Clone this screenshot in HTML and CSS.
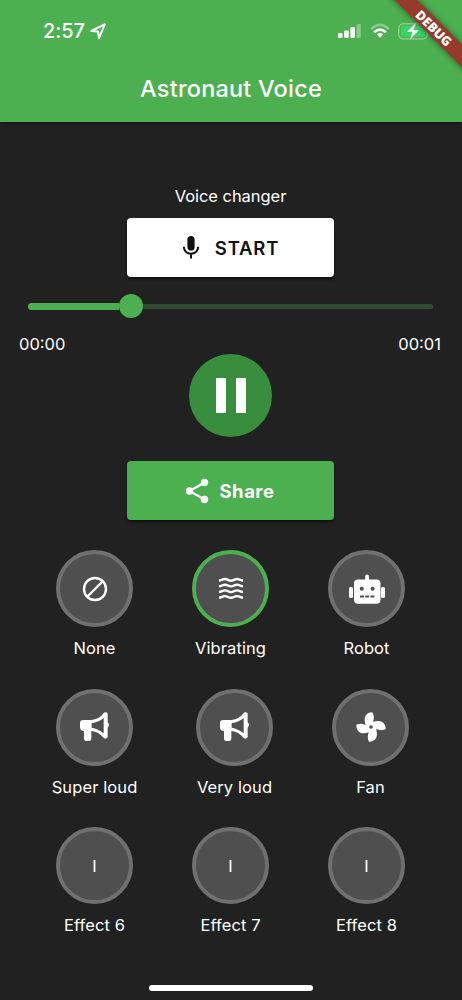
FILE: index.html
```html
<!DOCTYPE html>
<html lang="en">
<head>
<meta charset="utf-8">
<title>Astronaut Voice</title>
<link rel="stylesheet" href="styles.css">
</head>
<body>
<div class="app">
  <header class="header">
    <div class="status">
      <span class="clock">2:57</span>
      <svg class="location" width="16" height="17" viewBox="0 0 16 17"><path d="M1.2 8 14.7 1.3 9 15.2 8 8.6Z"/></svg>
      <span class="spacer"></span>
      <svg class="signal" width="24" height="16" viewBox="0 0 24 16"><rect x="0" y="10" width="4.5" height="5" rx="1"/><rect x="6.2" y="7.5" width="4.5" height="7.5" rx="1"/><rect x="12.4" y="4" width="4.5" height="11" rx="1"/><rect class="faded" x="18.6" y="1" width="4.2" height="14" rx="1"/></svg>
      <svg class="wifi" width="20" height="16" viewBox="0 0 20 16"><path class="faded" d="M1.2 6Q10-2.3 18.8 6"/><path d="M4.2 9.2Q10 4 15.8 9.2"/><path class="dot" d="M6.6 11.3Q10 8.5 13.4 11.3L10 14.7Z"/></svg>
      <svg class="battery" width="34" height="20" viewBox="0 0 34 20"><rect x=".8" y="2.8" width="28.5" height="15" rx="4.5" fill="none" stroke="#9bd09c" stroke-width="1.2"/><rect x="2.8" y="4.8" width="24.5" height="11" rx="2.5" fill="#33d764"/><path d="M31 8v5q2-2.500 0-5" fill="#9bd09c"/><path d="M18.500 1 8.500 11h5.500l-2.600 8.500 10-10.500h-5.600Z" fill="#fff" stroke="#4caf50" stroke-width=".5"/></svg>
    </div>
    <h1 class="title">Astronaut Voice</h1>
    <div class="debug">DEBUG</div>
  </header>

  <main class="main">
    <div class="caption">Voice changer</div>
    <button class="button start">
      <svg width="18" height="25" viewBox="0 0 18 25"><rect x="5.400" y="1" width="7.200" height="14.500" rx="3.600" fill="#111"/><path d="M1.800 11.800C1.800 21 16.200 21 16.200 11.800M9 19v4.500" fill="none" stroke="#111" stroke-width="2"/></svg>
      <span>START</span>
    </button>
    <div class="slider"><div class="played"></div><div class="thumb"></div><div class="rest"></div></div>
    <div class="times"><span>00:00</span><span>00:01</span></div>
    <div class="pause"><i></i><i></i></div>
    <button class="button share">
      <svg width="24" height="26" viewBox="0 0 24 26"><path d="M19.500 4.500 4.500 13l15 8.500" fill="none" stroke="#fff" stroke-width="2.200"/><g fill="#fff"><circle cx="19.500" cy="4.500" r="3.700"/><circle cx="4.500" cy="13" r="3.700"/><circle cx="19.500" cy="21.500" r="3.700"/></g></svg>
      <span>Share</span>
    </button>

    <section class="effects">
      <div class="row">
        <div class="effect"><div class="disc"><svg width="26" height="26" viewBox="0 0 26 26" fill="none" stroke="#fff" stroke-width="2.400"><circle cx="13" cy="13" r="11"/><path d="M5.500 20.500l15-15"/></svg></div><span>None</span></div>
        <div class="effect"><div class="disc selected"><svg width="26" height="24" viewBox="0 0 26 24" fill="none" stroke="#fff" stroke-width="2.400"><path d="M1 3.500c3 0 3-1.500 6-1.500s3 1.700 6 1.700S16 2 19 2s3 1.500 6 1.500M1 9.200c3 0 3-1.500 6-1.500s3 1.700 6 1.700 3-1.700 6-1.700 3 1.500 6 1.500M1 14.900c3 0 3-1.500 6-1.500s3 1.700 6 1.700 3-1.700 6-1.700 3 1.500 6 1.500M1 20.600c3 0 3-1.500 6-1.500s3 1.700 6 1.700 3-1.700 6-1.700 3 1.500 6 1.500"/></svg></div><span>Vibrating</span></div>
        <div class="effect"><div class="disc"><svg width="38" height="30" viewBox="0 0 38 30"><g fill="#fff"><rect x="1" y="13" width="4" height="11" rx="1.500"/><rect x="33" y="13" width="4" height="11" rx="1.500"/><rect x="6" y="5.500" width="26.500" height="24.300" rx="4"/><rect x="17.200" y=".5" width="3.800" height="8" rx="1.900"/></g><g fill="#4f4f4f"><circle cx="13.800" cy="14.800" r="2"/><circle cx="24.600" cy="14.800" r="2"/><path d="M12 21.500h4v2h-4zM17.200 21.500h4v2h-4zM22.400 21.500h4v2h-4z"/></g></svg></div><span>Robot</span></div>
      </div>
      <div class="row">
        <div class="effect wide"><div class="disc"><svg width="30" height="30" viewBox="0 0 90 90"><path d="M10 24H34Q58 21 69 5Q76-3 83 4V31Q91 38 83 47V76Q76 84 69 76Q57 60 34 57V80Q34 87 27 87H19Q12 87 12 80V58Q0 56 0 46V34Q0 24 10 24ZM35 34V47Q54 50 71 64V18Q55 31 35 34Z" fill="#fff" fill-rule="evenodd"/></svg></div><span>Super loud</span></div>
        <div class="effect"><div class="disc"><svg width="30" height="30" viewBox="0 0 90 90"><path d="M10 24H34Q58 21 69 5Q76-3 83 4V31Q91 38 83 47V76Q76 84 69 76Q57 60 34 57V80Q34 87 27 87H19Q12 87 12 80V58Q0 56 0 46V34Q0 24 10 24ZM35 34V47Q54 50 71 64V18Q55 31 35 34Z" fill="#fff" fill-rule="evenodd"/></svg></div><span>Very loud</span></div>
        <div class="effect"><div class="disc"><svg width="30" height="30" viewBox="0 0 90 90"><path d="M49 1C28 2 22 17 29 39C18 34 8 35 1 38C0 59 15 69 38 61C34 72 35 82 39 89C59 89 68 74 60 51C71 56 82 55 89 51C89 31 75 22 51 29C56 18 53 8 49 1Z" fill="#fff"/><circle cx="45" cy="45" r="5.500" fill="#505050"/></svg></div><span>Fan</span></div>
      </div>
      <div class="row">
        <div class="effect"><div class="disc">I</div><span>Effect 6</span></div>
        <div class="effect"><div class="disc">I</div><span>Effect 7</span></div>
        <div class="effect"><div class="disc">I</div><span>Effect 8</span></div>
      </div>
    </section>
  </main>
  <div class="home"></div>
</div>
</body>
</html>
```
FILE: styles.css
```css
* { box-sizing: border-box; }
body { margin: 0; background: #212121; }
.app {
  position: relative;
  display: flex;
  flex-direction: column;
  width: 462px;
  height: 1000px;
  overflow: hidden;
  background: #212121;
  color: #fff;
  font: 400 16.5px/20px Inter, sans-serif;
}
svg { display: block; flex: none; }
.header {
  position: relative;
  height: 122px;
  flex: none;
  overflow: hidden;
  background: #4caf50;
}
.app::before {
  content: "";
  position: absolute;
  top: 120px;
  width: 100%;
  height: 2px;
  box-shadow: 0 1px 3px #0009;
}
.status { display: flex; align-items: center; height: 62px; padding: 0 30px 0 43px; }
.clock { font-size: 20px; font-weight: 500; width: 44px; letter-spacing: -.1px; white-space: nowrap; }
.location { margin-left: 3px; fill: none; stroke: #fff; stroke-width: 2; stroke-linejoin: round; }
.spacer { flex: 1; }
.signal { fill: #fff; }
.faded { opacity: .35; }
.wifi { margin: 0 8px; fill: none; stroke: #fff; stroke-width: 2.5; }
.wifi .dot { fill: #fff; stroke: none; }
.title { margin: 12px 0 0; font-size: 23.5px; line-height: 30px; font-weight: 500; text-align: center; letter-spacing: .2px; }
.debug {
  position: absolute;
  left: 364px;
  top: 20px;
  width: 140px;
  height: 16px;
  transform: rotate(45deg);
  background: #973a2b;
  box-shadow: 0 0 6px #0008;
  font: 800 13px/16px "Open Sans", sans-serif;
  text-align: center;
}
.main { display: flex; flex-direction: column; align-items: center; padding: 64px 1px 0 0; }
.caption { letter-spacing: -.05px; }
.button {
  display: flex;
  align-items: center;
  justify-content: center;
  width: 207px;
  height: 59px;
  padding: 0;
  border: 0;
  border-radius: 4px;
  box-shadow: 0 2px 3px #0008;
  font: 700 18.5px/24px Inter, sans-serif;
}
.start { margin-top: 12px; gap: 15px; background: #fff; color: #111; font-weight: 600; letter-spacing: .8px; }
.share { margin-top: 24px; gap: 11px; padding-right: 2px; background: #4caf50; color: #fff; letter-spacing: .5px; }
.slider { display: flex; align-items: center; width: 405px; height: 24px; margin-top: 17px; }
.played { width: 91px; height: 7px; border-radius: 4px 0 0 4px; background: #4caf50; }
.thumb { width: 24px; height: 24px; border-radius: 50%; background: #4caf50; }
.rest { flex: 1; height: 5px; border-radius: 0 3px 3px 0; background: #2e4a30; }
.times { display: flex; justify-content: space-between; align-self: stretch; padding: 0 20px 0 19px; margin-top: 16px; }
.pause {
  display: flex;
  align-items: center;
  justify-content: center;
  gap: 10px;
  width: 83px;
  height: 83px;
  border-radius: 50%;
  background: #388e3c;
}
.pause i { width: 10px; height: 35px; background: #fff; }
.effects { display: flex; flex-direction: column; gap: 30px; margin-top: 30px; }
.row { display: flex; justify-content: center; gap: 59px; height: 108.5px; }
.effect { display: flex; flex-direction: column; align-items: center; width: 77px; white-space: nowrap; letter-spacing: .1px; }
.effect.wide { width: 85px; }
.effect > span { margin-top: 11px; }
.disc {
  display: flex;
  align-items: center;
  justify-content: center;
  width: 77px;
  height: 77px;
  flex: none;
  border: 4px solid #707070;
  border-radius: 50%;
  background: #4f4f4f;
}
.disc.selected { border-color: #4caf50; }
.home { position: absolute; left: 149px; top: 985px; width: 164px; height: 6px; border-radius: 3px; background: #fff; }
```
